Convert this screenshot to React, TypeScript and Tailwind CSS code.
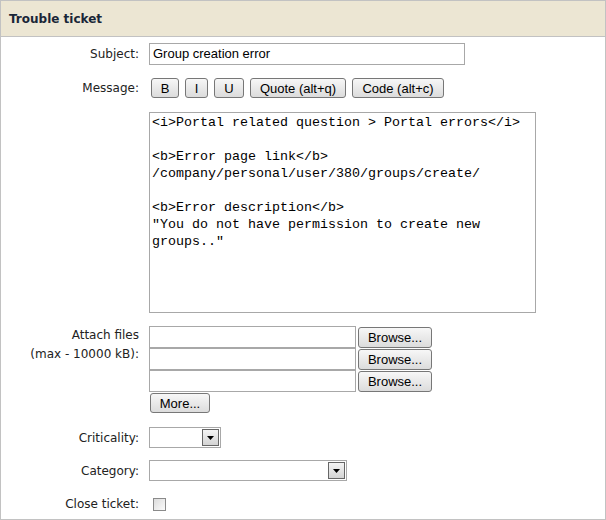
import React from "react";

const label = "w-[138px] shrink-0 text-right text-[12px] text-[#222]";
const btn =
  "h-[20px] px-0 text-[13px] leading-none text-black border border-[#777] rounded-[3px] bg-gradient-to-b from-[#f7f7f7] to-[#dcdcdc]";
const sans = { fontFamily: "'Liberation Sans', Arial, sans-serif" };

const SelectBox = ({ width }: { width: string }) => (
  <div className={`${width} h-[21px] border border-[#a8a8a8] bg-white flex justify-end items-center pr-[1px]`}>
    <div className="w-[17px] h-[17px] border border-[#666] bg-gradient-to-b from-[#f4f4f4] to-[#d4d4d4] flex items-center justify-center">
      <svg width="7" height="4" viewBox="0 0 7 4">
        <path d="M0 0h7L3.5 4z" fill="#000" />
      </svg>
    </div>
  </div>
);

const FileRow = () => (
  <div className="flex items-center">
    <div className="w-[207px] h-[22px] border border-[#a8a8a8] bg-white" />
    <button className={`${btn} ml-[2px] w-[74px] h-[21px]`} style={sans}>
      Browse...
    </button>
  </div>
);

const message = `<i>Portal related question > Portal errors</i>

<b>Error page link</b>
/company/personal/user/380/groups/create/

<b>Error description</b>
"You do not have permission to create new
groups.."`;

export default function App() {
  return (
    <div
      className="w-[606px] h-[520px] bg-white border border-[#c2c2c2] flex flex-col"
      style={{ fontFamily: "'DejaVu Sans', Verdana, sans-serif" }}
    >
      <div className="h-[36px] shrink-0 bg-[#ece6d3] border-b border-[#c2c2c2] flex items-center pl-[8px]">
        <span className="text-[12px] font-bold text-[#1a2638]">Trouble ticket</span>
      </div>

      <div className="flex items-center mt-[6px]">
        <div className={label}>Subject:</div>
        <div className="ml-[10px] w-[316px] h-[22px] border border-[#a8a8a8] flex items-center px-[3px] text-[13px] text-black" style={sans}>
          Group creation error
        </div>
      </div>

      <div className="flex items-center mt-[13px]">
        <div className={label}>Message:</div>
        <div className="ml-[12px] flex gap-[6px]" style={sans}>
          <button className={`${btn} w-[28px]`}>B</button>
          <button className={`${btn} w-[23px]`}>I</button>
          <button className={`${btn} w-[30px]`}>U</button>
          <button className={`${btn} w-[96px]`}>Quote (alt+q)</button>
          <button className={`${btn} w-[92px]`}>Code (alt+c)</button>
        </div>
      </div>

      <div className="flex mt-[14px]">
        <div className="w-[138px] shrink-0" />
        <pre
          className="ml-[10px] w-[387px] h-[201px] border border-[#a8a8a8] px-[2px] pt-[1px] text-[13.33px] leading-[17px] text-black whitespace-pre-wrap"
          style={{ fontFamily: "'Liberation Mono', 'Courier New', monospace" }}
        >
          {message}
        </pre>
      </div>

      <div className="flex mt-[13px]">
        <div className={`${label} leading-[19px]`}>
          Attach files
          <br />
          (max - 10000 kB):
        </div>
        <div className="ml-[10px] flex flex-col">
          <FileRow />
          <FileRow />
          <FileRow />
          <button className={`${btn} mt-[1px] ml-[1px] w-[60px]`} style={sans}>
            More...
          </button>
        </div>
      </div>

      <div className="flex items-center mt-[14px]">
        <div className={label}>Criticality:</div>
        <div className="ml-[10px]">
          <SelectBox width="w-[72px]" />
        </div>
      </div>

      <div className="flex items-center mt-[12px]">
        <div className={label}>Category:</div>
        <div className="ml-[10px]">
          <SelectBox width="w-[198px]" />
        </div>
      </div>

      <div className="flex items-center mt-[14px]">
        <div className={label}>Close ticket:</div>
        <div className="ml-[14px] w-[13px] h-[13px] border border-[#8a8a8a] bg-gradient-to-br from-[#dcdcdc] to-[#fbfbfb]" />
      </div>
    </div>
  );
}
